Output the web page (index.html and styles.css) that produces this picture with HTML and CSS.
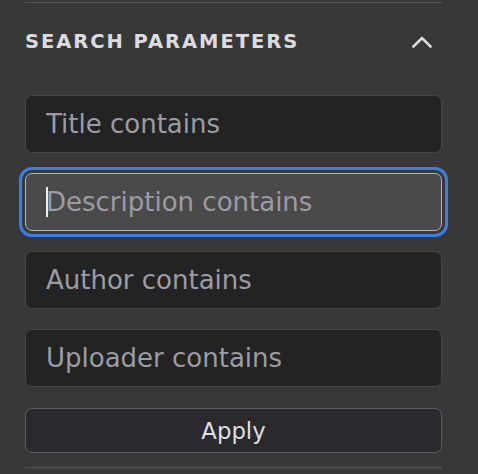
FILE: index.html
```html
<!DOCTYPE html>
<html lang="en">
<head>
<meta charset="utf-8">
<link rel="stylesheet" href="styles.css">
</head>
<body>
<div class="panel">
  <div class="divider"></div>
  <div class="section-header">
    <h2 class="section-title">Search parameters</h2>
    <button class="collapse-btn" type="button" aria-label="Collapse">
      <svg width="22" height="14" viewBox="0 0 22 14"><path d="M2.5 11.5 L11 3 L19.5 11.5" fill="none" stroke="#dcdcdc" stroke-width="2.6" stroke-linecap="square"/></svg>
    </button>
  </div>
  <div class="fields">
    <input class="field" type="text" placeholder="Title contains">
    <div class="field-wrap">
      <input class="field field-focused" type="text" placeholder="Description contains">
      <span class="caret"></span>
    </div>
    <input class="field" type="text" placeholder="Author contains">
    <input class="field" type="text" placeholder="Uploader contains">
    <button class="apply" type="button">Apply</button>
  </div>
  <div class="divider divider-bottom"></div>
</div>
</body>
</html>
```
FILE: styles.css
```css
html, body {
  margin: 0;
  padding: 0;
  background: #383838;
  font-family: "DejaVu Sans", "Liberation Sans", sans-serif;
}
.panel {
  width: 417px;
  margin-left: 25px;
  padding-top: 2px;
}
.divider {
  height: 1px;
  background: #565656;
}
.section-header {
  display: flex;
  align-items: center;
  justify-content: space-between;
  height: 24px;
  margin: 27px 0 41px;
}
.section-title {
  margin: 0;
  font-size: 19.5px;
  line-height: 24px;
  font-weight: bold;
  letter-spacing: 1.95px;
  text-transform: uppercase;
  color: #dcdce0;
}
.collapse-btn {
  background: none;
  border: none;
  padding: 0;
  margin-right: 9px;
  display: flex;
  align-items: center;
}
.fields {
  display: flex;
  flex-direction: column;
  gap: 20px;
}
.field {
  box-sizing: border-box;
  height: 58px;
  width: 100%;
  margin: 0;
  padding: 0 20px;
  border: 1px solid #454545;
  border-radius: 7px;
  background: #232323;
  color: #e0e0e0;
  caret-color: transparent;
  font-family: "DejaVu Sans", sans-serif;
  font-size: 26px;
  outline: none;
  display: block;
}
.field::placeholder {
  color: #9c9ca4;
  opacity: 1;
}
.field-wrap {
  position: relative;
}
.field-focused {
  background: #4a4a4a;
  border-color: #b4b4b4;
  outline: 3px solid #3b7fe6;
  outline-offset: 3px;
}
.caret {
  position: absolute;
  left: 21px;
  top: 14px;
  width: 2px;
  height: 30px;
  background: #f0f0f0;
}
.apply {
  box-sizing: border-box;
  height: 45px;
  width: 100%;
  margin: 1px 0 0;
  border: 1px solid #5e5e62;
  border-radius: 7px;
  background: #2a2a2e;
  color: #dedee2;
  font-family: "DejaVu Sans", sans-serif;
  font-size: 22.8px;
  padding: 0;
}
.divider-bottom {
  margin-top: 14px;
}
```
